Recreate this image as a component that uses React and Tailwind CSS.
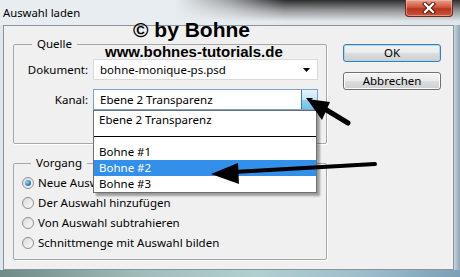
import React from 'react'

const ui = { fontFamily: '"Noto Sans", "Segoe UI", Tahoma, sans-serif' }

function ComboArrow() {
  return (
    <svg width="7" height="4" viewBox="0 0 7 4" className="block">
      <path d="M0 0h7L3.5 4z" fill="#000" />
    </svg>
  )
}

function Radio({ checked, label }) {
  return (
    <div className="flex h-[20px] items-center gap-[4px]">
      <div className="flex h-[12px] w-[12px] items-center justify-center rounded-full border border-[#8f8f8f] bg-[linear-gradient(135deg,#dcdcdc,#f8f8f8)]">
        {checked && (
          <div className="h-[6px] w-[6px] rounded-full bg-[radial-gradient(circle_at_35%_35%,#9fd6f5,#1d6fae_70%,#124e80)]" />
        )}
      </div>
      <span className="text-[11.5px] leading-none text-black">{label}</span>
    </div>
  )
}

function Button({ focused, children }) {
  return (
    <div
      className={`flex h-[18px] w-[98px] items-center justify-center rounded-[3px] border bg-[linear-gradient(to_bottom,#f3f3f3_0%,#ebebeb_50%,#dddddd_51%,#cfcfcf_100%)] text-[11.5px] leading-none text-black ${
        focused ? 'border-[#3c7fb1] shadow-[inset_0_0_0_1px_#a6d7f3]' : 'border-[#707070] shadow-[inset_0_0_0_1px_#fcfcfc]'
      }`}
    >
      {children}
    </div>
  )
}

export default function App() {
  return (
    <div className="relative h-[277px] w-[460px] overflow-hidden bg-[#dfe6ec]" style={ui}>
      {/* title bar */}
      <div className="relative flex h-[25px] items-start justify-between bg-[linear-gradient(to_bottom,rgba(25,25,25,0.9)_0%,rgba(60,60,60,0.5)_40%,rgba(60,60,60,0)_85%),linear-gradient(to_right,#e9eef2_0%,#dfe5ea_100%)]">
        <div className="absolute inset-0 bg-[linear-gradient(to_right,#e8edf1_0%,#e8edf1_38%,rgba(232,237,241,0.6)_50%,rgba(232,237,241,0)_62%)]" />
        <span className="relative pl-[3px] pt-[6px] text-[11.3px] leading-[14px] text-black">Auswahl laden</span>
        <div className="relative mr-[7px] flex h-[17px] w-[48px] items-center justify-center rounded-b-[4px] border border-t-0 border-[#6b2a20] bg-[linear-gradient(to_bottom,#e8a08f_0%,#d0553c_45%,#b8341c_55%,#c9573c_100%)] shadow-[inset_0_0_0_1px_rgba(255,200,190,0.5)]">
          <svg width="14" height="12" viewBox="0 0 14 12">
            <path d="M3 2L11 10M11 2L3 10" stroke="#3d1208" strokeWidth="4.2" strokeLinecap="square" />
            <path d="M3 2L11 10M11 2L3 10" stroke="#fff" strokeWidth="2.4" strokeLinecap="square" />
          </svg>
        </div>
      </div>

      {/* middle */}
      <div className="flex h-[245px]">
        <div className="w-[3px] bg-[#dfe6ec]" />
        <div className="flex flex-1 border border-[#8a949c] bg-[#f0f0f0]">
          {/* left column */}
          <div className="ml-[9px] mt-[11px] flex w-[314px] flex-col gap-[12px]">
            <fieldset className="h-[107px] rounded-[2px] border border-[#a7a7a7] shadow-[1px_1px_0_#ffffff]">
              <legend className="ml-[18px] px-[5px] text-[11.5px] leading-[14px] text-black">Quelle</legend>
              <div className="mt-[8px] grid grid-cols-[74px_225px] gap-x-[5px] gap-y-[9px]">
                <div className="flex h-[21px] items-center justify-end text-[11.5px] leading-none">Dokument:</div>
                <div className="flex h-[21px] items-center justify-between border border-[#d9d9d9] bg-white pl-[6px] pr-[7px] text-[11.5px] leading-none">
                  <span>bohne-monique-ps.psd</span>
                  <ComboArrow />
                </div>
                <div className="flex h-[21px] items-center justify-end text-[11.5px] leading-none">Kanal:</div>
                <div className="relative z-10">
                  <div className="flex h-[21px] items-center justify-between border border-[#7da2ce] bg-white pl-[6px] text-[11.5px] leading-none">
                    <span>Ebene 2 Transparenz</span>
                    <div className="flex h-full w-[16px] items-center justify-center border-l border-[#3c7fb1] bg-[linear-gradient(to_bottom,#e5f4fc_0%,#c4e5f6_50%,#98d1ef_51%,#6ec1ea_100%)]">
                      <ComboArrow />
                    </div>
                  </div>
                  <div className="absolute left-0 top-[21px] w-[224px] border border-[#6e6e6e] bg-white pt-[1px] text-[11.5px] leading-none shadow-[3px_3px_2px_rgba(0,0,0,0.35)]">
                    <div className="flex h-[16px] items-center pl-[5px]">Ebene 2 Transparenz</div>
                    <div className="flex h-[16px] items-center">
                      <div className="h-px w-full bg-black" />
                    </div>
                    <div className="flex h-[16px] items-center pl-[5px]">Bohne #1</div>
                    <div className="flex h-[16px] items-center bg-[#3390ea] pl-[5px] text-white">Bohne #2</div>
                    <div className="flex h-[16px] items-center pl-[5px]">Bohne #3</div>
                  </div>
                </div>
              </div>
            </fieldset>

            <fieldset className="h-[104px] rounded-[2px] border border-[#a7a7a7] shadow-[1px_1px_0_#ffffff]">
              <legend className="ml-[17px] px-[5px] text-[11.5px] leading-[14px] text-black">Vorgang</legend>
              <div className="mt-[3px] flex flex-col pl-[8px]">
                <Radio checked label="Neue Auswahl" />
                <Radio label="Der Auswahl hinzufügen" />
                <Radio label="Von Auswahl subtrahieren" />
                <Radio label="Schnittmenge mit Auswahl bilden" />
              </div>
            </fieldset>
          </div>

          {/* right column */}
          <div className="ml-[16px] mt-[18px] flex flex-col gap-[10px]">
            <Button focused>OK</Button>
            <Button>Abbrechen</Button>
          </div>
        </div>
        <div className="w-[6px] bg-[linear-gradient(to_right,#c9d3da,#8ea6b6)]" />
      </div>

      {/* bottom frame */}
      <div className="h-[7px] bg-[linear-gradient(to_right,#6f8a87_0%,#9fbcb9_30%,#b2cfd0_55%,#9cbccb_80%,#7b9fb6_100%)]" />

      {/* watermark */}
      <div
        className="pointer-events-none absolute left-[133px] top-[19px] text-[21px] font-bold leading-none text-black"
        style={{ fontFamily: '"Liberation Sans", Arial, sans-serif' }}
      >
        © by Bohne
      </div>
      <div
        className="pointer-events-none absolute left-[105px] top-[44px] text-[15px] font-bold leading-none text-black"
        style={{ fontFamily: '"Liberation Sans", Arial, sans-serif' }}
      >
        www.bohnes-tutorials.de
      </div>

      {/* arrows */}
      <svg className="pointer-events-none absolute inset-0 z-20" width="460" height="277" viewBox="0 0 460 277">
        <path d="M348 123L320 106" stroke="#000" strokeWidth="5" strokeLinecap="round" />
        <path d="M307 99L330 102L322 120Z" fill="#000" />
        <path d="M375 164L234 172" stroke="#000" strokeWidth="4" strokeLinecap="round" />
        <path d="M211 174L238 163L239 184Z" fill="#000" />
      </svg>
    </div>
  )
}
